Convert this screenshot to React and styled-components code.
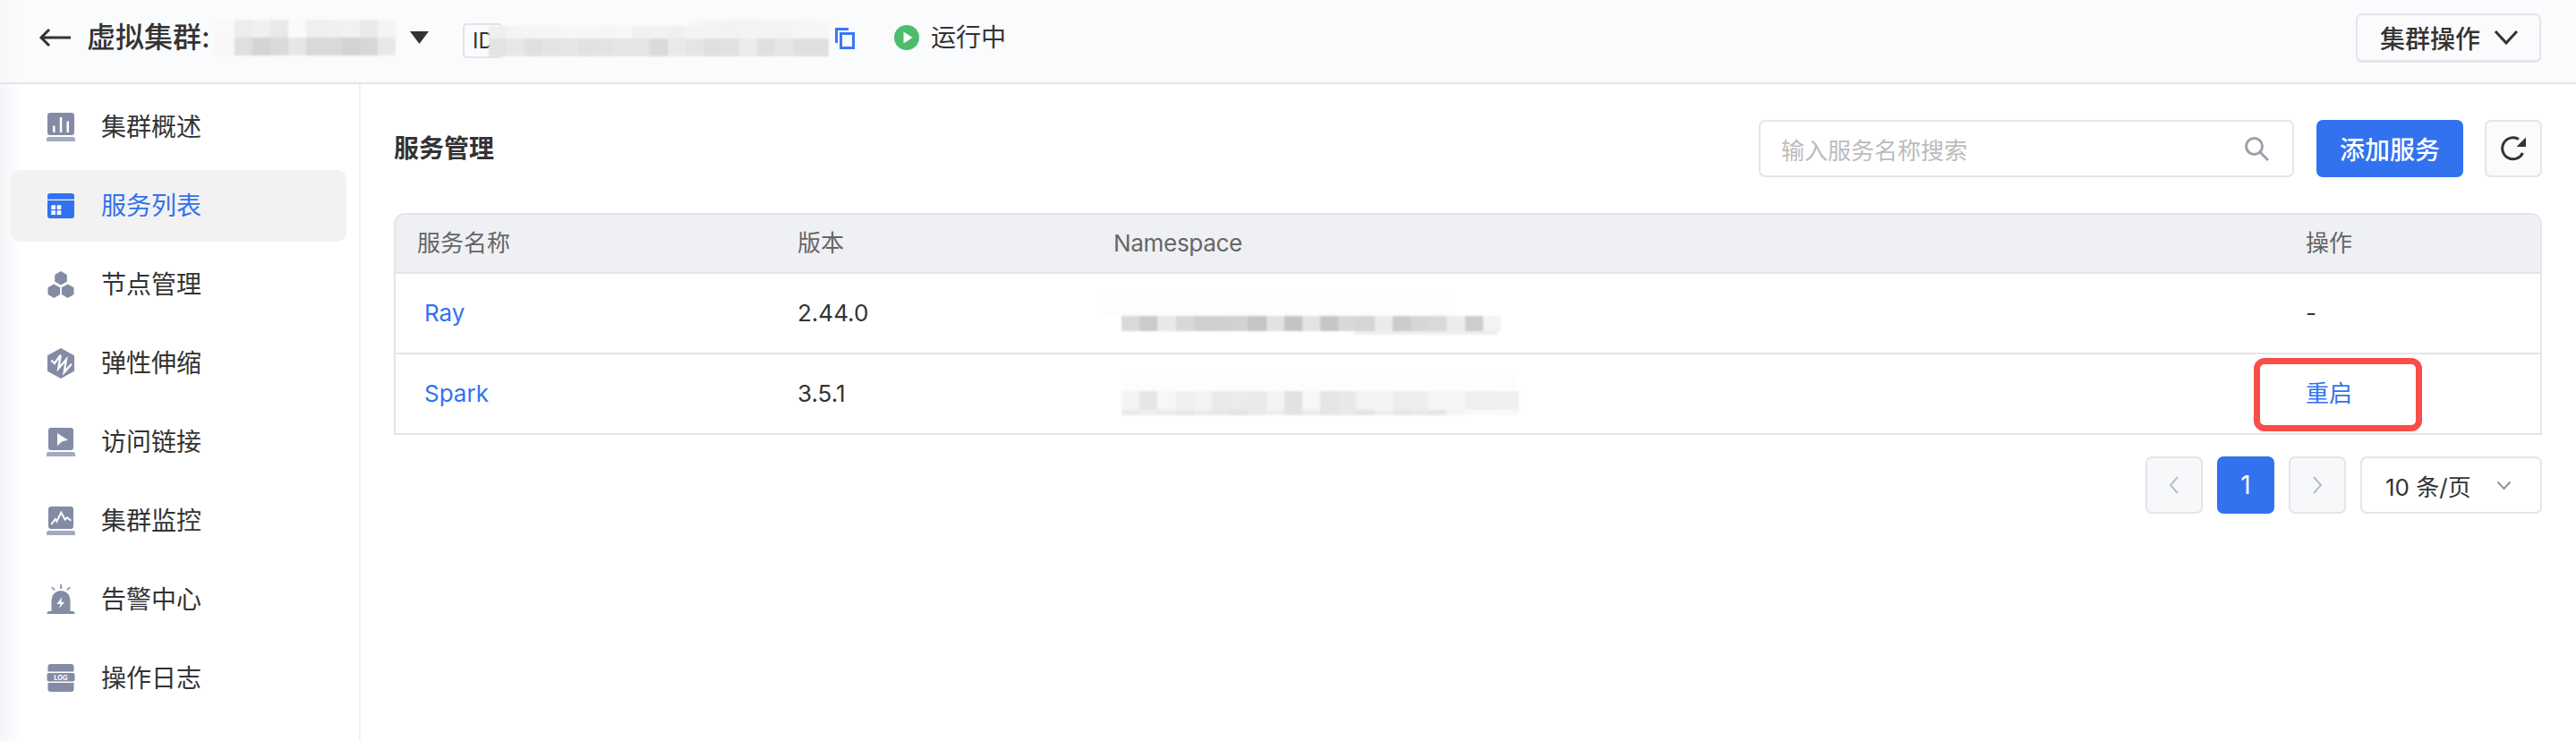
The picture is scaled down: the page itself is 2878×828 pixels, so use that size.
import React from 'react';
import styled, { createGlobalStyle } from 'styled-components';

const GlobalStyle = createGlobalStyle`
  html, body {
    margin: 0;
    height: 100%;
    overflow: hidden;
    background: #fff;
  }
  #root {
    height: 100%;
  }
  * {
    box-sizing: border-box;
  }
`;

const FONT = 'Inter, "Noto Sans CJK SC", sans-serif';
const BLUE = '#3272ef';
const LINE = '#e4e5ea';
const ICON = '#848ba5';

const Page = styled.div`
  display: flex;
  flex-direction: column;
  height: 100%;
  font-family: ${FONT};
  color: #333;
`;

const Header = styled.header`
  flex: none;
  display: flex;
  align-items: center;
  height: 94px;
  padding: 0 39px 8px 43px;
  background: linear-gradient(to right, #f6f7f9 0, #fafbfd 25px);
  border-bottom: 2px solid ${LINE};
`;

const BackIcon = styled.svg`
  flex: none;
  width: 36px;
  height: 24px;
`;

const ClusterTitle = styled.div`
  flex: none;
  width: 143px;
  margin-left: 18px;
  font-size: 32px;
  line-height: 40px;
  font-weight: 500;
  white-space: nowrap;
`;

const Caret = styled.svg`
  flex: none;
  width: 21px;
  height: 14px;
  margin-left: 16px;
`;

const IdTag = styled.span`
  flex: none;
  display: flex;
  align-items: center;
  width: 45px;
  height: 39px;
  margin-left: 38px;
  margin-top: 6px;
  padding-left: 9px;
  border: 2px solid #e2e3e7;
  border-radius: 5px;
  font-size: 24px;
  background: #fafbfc;
`;

const CopyIcon = styled.svg`
  flex: none;
  width: 22px;
  height: 24px;
  margin-left: 3px;
  margin-top: 2px;
`;

const PlayIcon = styled.svg`
  flex: none;
  width: 28px;
  height: 28px;
  margin-left: 44px;
`;

const StatusText = styled.span`
  margin-left: 13px;
  font-size: 28px;
  line-height: 40px;
`;

const ActionButton = styled.button`
  display: flex;
  align-items: center;
  gap: 15px;
  width: 207px;
  height: 55px;
  margin-left: auto;
  padding: 0 0 0 25px;
  border: 2px solid #e4e5e9;
  border-bottom-width: 3px;
  border-radius: 7px;
  background: #fbfbfd;
  font-family: ${FONT};
  font-size: 28px;
  font-weight: 500;
  color: #333;
`;

const Body = styled.div`
  flex: 1;
  display: flex;
  min-height: 0;
`;

const Sidebar = styled.nav`
  flex: none;
  display: flex;
  flex-direction: column;
  gap: 8px;
  width: 403px;
  padding: 8px 14px 0 12px;
  border-right: 2px solid #f0f1f3;
  background: linear-gradient(to right, #f4f5f8 0, #fff 25px);
`;

const NavItem = styled.div`
  display: flex;
  align-items: center;
  gap: 29px;
  height: 80px;
  padding-left: 40px;
  border-radius: 10px;
  background: ${({ $active }) => ($active ? '#f2f2f3' : 'transparent')};
  color: ${({ $active }) => ($active ? BLUE : '#333')};
  font-size: 28px;
  line-height: 40px;
`;

const NavIcon = styled.svg`
  flex: none;
  width: 32px;
  height: 32px;
  overflow: visible;
`;

const Main = styled.main`
  flex: 1;
  min-width: 0;
  padding: 40px 38px 0 37px;
`;

const Toolbar = styled.div`
  display: flex;
  align-items: center;
  height: 64px;
`;

const PageTitle = styled.h2`
  margin: 0;
  font-size: 28px;
  line-height: 40px;
  font-weight: 600;
`;

const SearchBox = styled.div`
  display: flex;
  align-items: center;
  justify-content: space-between;
  width: 598px;
  height: 64px;
  margin-left: auto;
  padding: 0 26px 0 23px;
  border: 2px solid #e4e5e9;
  border-radius: 7px;
  font-size: 26px;
  color: #bcbcbc;
`;

const SearchIcon = styled.svg`
  width: 28px;
  height: 28px;
`;

const AddButton = styled.button`
  width: 164px;
  height: 64px;
  margin-left: 25px;
  border: 0;
  border-radius: 7px;
  background: ${BLUE};
  color: #fff;
  font-family: ${FONT};
  font-size: 28px;
  font-weight: 500;
`;

const RefreshButton = styled.button`
  display: flex;
  align-items: center;
  justify-content: center;
  width: 64px;
  height: 64px;
  margin-left: 24px;
  padding: 0;
  border: 2px solid #e4e5e9;
  border-radius: 7px;
  background: #fafbfc;
`;

const Table = styled.div`
  margin-top: 40px;
  border: 2px solid ${LINE};
  border-top-left-radius: 12px;
  border-top-right-radius: 12px;
`;

const Row = styled.div`
  display: grid;
  grid-template-columns: 425px 353px 1332px 1fr;
  height: ${({ $head, $last }) => ($head ? '66px' : $last ? '88px' : '90px')};
  border-bottom: ${({ $last }) => ($last ? '0' : `2px solid ${LINE}`)};
  background: ${({ $head }) => ($head ? '#eff0f4' : '#fff')};
  color: ${({ $head }) => ($head ? '#666' : '#333')};
  border-top-left-radius: ${({ $head }) => ($head ? '10px' : '0')};
  border-top-right-radius: ${({ $head }) => ($head ? '10px' : '0')};
`;

const Cell = styled.div`
  position: relative;
  display: flex;
  align-items: center;
  padding-left: 24px;
  font-size: 26px;
  line-height: 36px;
`;

const NamespaceLabel = styled.span`
  letter-spacing: -0.3px;
`;

const ServiceLink = styled.a`
  margin-left: ${({ $indent }) => ($indent ? '8px' : '0')};
  color: ${BLUE};
`;

const Highlight = styled.div`
  position: absolute;
  top: 4px;
  left: -34px;
  width: 188px;
  height: 82px;
  border: 7px solid #f94d49;
  border-radius: 12px;
  pointer-events: none;
`;

const Pagination = styled.div`
  display: flex;
  justify-content: flex-end;
  gap: 16px;
  margin-top: 24px;
`;

const PageButton = styled.div`
  display: flex;
  align-items: center;
  justify-content: center;
  width: 64px;
  height: 64px;
  border: ${({ $active }) => ($active ? '0' : `2px solid ${LINE}`)};
  border-radius: 7px;
  background: ${({ $active }) => ($active ? BLUE : '#f7f8fa')};
  color: #fff;
  font-size: 28px;
`;

const PageSize = styled.div`
  display: flex;
  align-items: center;
  justify-content: space-between;
  width: 203px;
  height: 64px;
  padding: 0 32px 0 26px;
  border: 2px solid ${LINE};
  border-radius: 7px;
  font-size: 26px;
  color: #333;
`;

// stands in for the pixelated (redacted) text of the screenshot
const Mosaic = styled.div`
  flex: none;
  display: flex;
  flex-direction: column;
  margin-left: ${({ $left }) => $left || 0}px;
  margin-top: ${({ $top }) => $top || 0}px;
  filter: blur(0.8px);
  position: relative;
`;

const MosaicRow = styled.div`
  display: flex;
  height: ${({ $h }) => $h}px;
  margin-left: ${({ $indent }) => $indent || 0}px;
`;

const MosaicCell = styled.div`
  flex: none;
  width: ${({ $w }) => $w || 20}px;
  background: ${({ $c }) => $c};
`;

const Redacted = ({ rows, left, top }) => (
  <Mosaic $left={left} $top={top}>
    {rows.map((row, i) => (
      <MosaicRow key={i} $h={row.h} $indent={row.indent}>
        {row.cells.map((c, j) => (
          <MosaicCell key={j} $c={c} $w={row.w && j === 0 ? row.w : row.cw} />
        ))}
      </MosaicRow>
    ))}
  </Mosaic>
);

const hex = (s) => s.split(' ').map((c) => '#' + c);

const TITLE_ROWS = [
  { h: 20, w: 22, cells: hex('f9f9fa ededee f0f0f1 e8e9ea fafafb eeeff0 eff0f0 f1f1f2 e9eaeb f4f4f5') },
  { h: 20, w: 22, cells: hex('f7f7f8 dedfe0 d4d4d5 d9dadb e6e6e7 d8d9da d8d9da d2d3d3 d6d7d8 e8e8e9') },
];

const ID_ROWS = [
  { h: 7, indent: 224, cells: hex('f7f7f8 f4f4f5 f3f3f4 f3f3f4 f4f4f5 f4f4f5 f6f6f7 f8f8f9') },
  { h: 14, cells: hex('efeff0 f4f4f5 f4f5f6 f5f5f6 f6f6f7 f7f7f8 f5f5f6 f7f7f8 f1f1f2 f2f2f3 f0f0f1 f4f4f5 f3f3f4 f2f2f3 f4f4f5 f3f3f4 f3f3f4 f6f6f7 f6f6f7') },
  { h: 20, cells: hex('e2e3e4 e8e8e9 dfe0e1 e3e4e5 e6e6e7 e1e2e3 e2e3e4 e6e6e7 e4e5e6 d9dbd8 e9e9ea e5e5e6 dfe0e1 e1e2e3 ebebe9 dfe0e1 e6e6e7 dfe0e1 e0e0e1') },
];

const NS_RAY_ROWS = [
  { h: 22, indent: -27, w: 400, cells: hex('fdfdfd') },
  { h: 17, cw: 20.2, cells: hex('d9d9d9 cbcbcb e8e8e8 d8d8d8 cfcfcf d0d0d0 d2d2d2 c5c5c5 e2e2e2 c4c4c4 e3e3e3 c6c6c6 d8d8d8 d5d5d5 ebebeb cbcbcb d6d6d6 d9d9d9 ececec cdcdcd f3f3f3') },
  { h: 4, indent: 260, w: 160, cells: hex('eeeeee') },
];

const NS_SPARK_ROWS = [
  { h: 17, w: 440, cells: hex('fdfdfd') },
  { h: 21, cw: 20.2, cells: hex('f4f4f4 e6e6e6 f7f7f7 f0f0f0 f3f3f3 e9e9e9 ebebeb e9e9e9 f3f3f3 e2e2e2 f7f7f7 e5e5e5 e8e8e8 f3f3f3 f4f4f4 eeeeee eeeeee f6f6f6 f6f6f6 efefef efefef f0f0f0') },
  { h: 6, cw: 20.2, cells: hex('e9e9e9 efefef ebebeb e6e6e6 ebebeb e8e8e8 e4e4e4 e9e9e9 eeeeee e4e4e4 ebebeb e6e6e6 e9e9e9 e4e4e4 efefef e6e6e6 e9e9e9 e6e6e6 f4f4f4 fafafa fafafa fafafa') },
];

const IconOverview = () => (
  <NavIcon viewBox="0 0 32 32">
    <rect x="1" y="0" width="30" height="25" rx="3" fill={ICON} />
    <path d="M0 32v-2.500A2.500 2.500 0 0 1 2.500 27h27a2.500 2.500 0 0 1 2.500 2.500V32z" fill="#a3a9be" />
    <path d="M7 14.500h2.500V22H7zM14.800 5h2.500v17h-2.500zM22.500 9.500H25V22h-2.500z" fill="#fff" />
  </NavIcon>
);

const IconList = () => (
  <NavIcon viewBox="0 0 32 32">
    <path d="M4 2h24a3 3 0 0 1 3 3v3.700H1V5a3 3 0 0 1 3-3z" fill={BLUE} />
    <path d="M1 10h30v17a3 3 0 0 1-3 3H4a3 3 0 0 1-3-3z" fill={BLUE} />
    <path d="M5.300 15.300H10v4.700H5.300zM11.600 15.300h4.700v4.700h-4.700zM5.300 21.300H10V26H5.300zM11.600 21.300h4.700V26h-4.700z" fill="#fff" />
  </NavIcon>
);

const IconNodes = () => (
  <NavIcon viewBox="0 0 32 32">
    <path d="M16 1l6.800 3.900v7.800L16 16.600l-6.800-3.900V4.900z" fill={ICON} />
    <path d="M8.300 15.400l6.800 3.900v7.800L8.300 31l-6.800-3.900v-7.800z" fill={ICON} />
    <path d="M23.700 15.400l6.800 3.900v7.800L23.700 31l-6.800-3.900v-7.800z" fill={ICON} />
  </NavIcon>
);

const IconScale = () => (
  <NavIcon viewBox="0 0 32 32">
    <path d="M16 -1l15 8.300v17.400L16 33 1 24.700V7.300z" fill={ICON} />
    <path d="M5.300 12.700L9 16l6.700-9.300-2.400 15L22 11.700 19.700 26l8.300-9.300" fill="none" stroke="#fff" strokeWidth="2.300" />
  </NavIcon>
);

const IconLink = () => (
  <NavIcon viewBox="0 0 32 32">
    <rect x="2" y="0" width="28" height="25" rx="3" fill={ICON} />
    <path d="M0 32v-2.500A2.500 2.500 0 0 1 2.500 27h27a2.500 2.500 0 0 1 2.500 2.500V32z" fill="#a3a9be" />
    <path d="M12 6l12 7.700-6.700 1.600-5.300 5z" fill="#fff" />
  </NavIcon>
);

const IconMonitor = () => (
  <NavIcon viewBox="0 0 32 32">
    <rect x="2" y="0" width="28" height="25" rx="3" fill={ICON} />
    <path d="M0 32v-2.500A2.500 2.500 0 0 1 2.500 27h27a2.500 2.500 0 0 1 2.500 2.500V32z" fill="#a3a9be" />
    <path d="M5.300 20l4.400-6 1.600 2.700 5-10 4.400 8 2.300-2.400 4.300 3.400" fill="none" stroke="#fff" strokeWidth="2" />
  </NavIcon>
);

const IconAlarm = () => (
  <NavIcon viewBox="0 0 32 32">
    <path d="M5.500 29V16.500a10.500 10.500 0 0 1 21 0V29z" fill={ICON} />
    <path d="M0.500 32v-.5A2.500 2.500 0 0 1 3 29h26a2.500 2.500 0 0 1 2.500 2.500v.5z" fill={ICON} />
    <path d="M15 -1h2.200v5H15zM5 3l1.400-1.500L10 4.500 8.600 6zM27 3l-1.400-1.500L22 4.500 23.400 6z" fill="#9aa0b6" />
    <path d="M17.300 13.300L11.300 21h4.400l-2 5 6.600-7.300h-4z" fill="#fff" />
  </NavIcon>
);

const IconLog = () => (
  <NavIcon viewBox="0 0 32 32">
    <path d="M4.500 0h23a3 3 0 0 1 3 3v5.500H1.500V3a3 3 0 0 1 3-3z" fill={ICON} />
    <rect x="0.500" y="10" width="31" height="9.500" rx="2" fill={ICON} />
    <path d="M1.500 21h29v7a3 3 0 0 1-3 3h-23a3 3 0 0 1-3-3z" fill={ICON} />
    <text x="16" y="18" textAnchor="middle" fontSize="7.500" fontWeight="700" fontFamily="Inter, sans-serif" fill="#fff">LOG</text>
  </NavIcon>
);

const NAV = [
  { label: '集群概述', icon: IconOverview },
  { label: '服务列表', icon: IconList, active: true },
  { label: '节点管理', icon: IconNodes },
  { label: '弹性伸缩', icon: IconScale },
  { label: '访问链接', icon: IconLink },
  { label: '集群监控', icon: IconMonitor },
  { label: '告警中心', icon: IconAlarm },
  { label: '操作日志', icon: IconLog },
];

const Chevron = ({ d, width, height, color, stroke }) => (
  <svg width={width} height={height} viewBox={`0 0 ${width} ${height}`} fill="none">
    <path d={d} stroke={color} strokeWidth={stroke} />
  </svg>
);

export default function App() {
  return (
    <Page>
      <GlobalStyle />
      <Header>
        <BackIcon viewBox="0 0 36 24" fill="none" stroke="#333" strokeWidth="3">
          <path d="M36 12H3M12 3l-9 9 9 9" />
        </BackIcon>
        <ClusterTitle>虚拟集群:</ClusterTitle>
        <Redacted rows={TITLE_ROWS} />
        <Caret viewBox="0 0 21 14">
          <path d="M0 0h21L10.500 14z" fill="#333" />
        </Caret>
        <IdTag>ID</IdTag>
        <Redacted rows={ID_ROWS} left={-16} />
        <CopyIcon viewBox="0 0 22 24" fill="none" stroke="#3b78f5" strokeWidth="3">
          <path d="M1.500 17V1.500H15" />
          <rect x="6.500" y="6.500" width="14" height="16" />
        </CopyIcon>
        <PlayIcon viewBox="0 0 28 28">
          <circle cx="14" cy="14" r="14" fill="#4bbd6c" />
          <path d="M10.500 7.500L20.500 14l-10 6.500z" fill="#fff" />
        </PlayIcon>
        <StatusText>运行中</StatusText>
        <ActionButton>
          集群操作
          <Chevron d="M2 2l12 13L26 2" width={28} height={17} color="#333" stroke={3} />
        </ActionButton>
      </Header>
      <Body>
        <Sidebar>
          {NAV.map(({ label, icon: Icon, active }) => (
            <NavItem key={label} $active={active}>
              <Icon />
              {label}
            </NavItem>
          ))}
        </Sidebar>
        <Main>
          <Toolbar>
            <PageTitle>服务管理</PageTitle>
            <SearchBox>
              输入服务名称搜索
              <SearchIcon viewBox="0 0 28 28" fill="none" stroke="#9ca1ab" strokeWidth="3">
                <circle cx="11.500" cy="11.500" r="9" />
                <path d="M18 18l9 9" />
              </SearchIcon>
            </SearchBox>
            <AddButton>添加服务</AddButton>
            <RefreshButton>
              <svg width="30" height="30" viewBox="0 0 30 30" fill="none">
                <path d="M25.500 20A12 12 0 1 1 21 4.500" stroke="#333" strokeWidth="3" />
                <path d="M29 2.500V13H18.500z" fill="#333" />
              </svg>
            </RefreshButton>
          </Toolbar>
          <Table>
            <Row $head>
              <Cell>服务名称</Cell>
              <Cell>版本</Cell>
              <Cell><NamespaceLabel>Namespace</NamespaceLabel></Cell>
              <Cell>操作</Cell>
            </Row>
            <Row>
              <Cell><ServiceLink $indent>Ray</ServiceLink></Cell>
              <Cell>2.44.0</Cell>
              <Cell><Redacted rows={NS_RAY_ROWS} left={9} top={5} /></Cell>
              <Cell>-</Cell>
            </Row>
            <Row $last>
              <Cell><ServiceLink $indent>Spark</ServiceLink></Cell>
              <Cell>3.5.1</Cell>
              <Cell><Redacted rows={NS_SPARK_ROWS} left={9} top={3} /></Cell>
              <Cell>
                <ServiceLink>重启</ServiceLink>
                <Highlight />
              </Cell>
            </Row>
          </Table>
          <Pagination>
            <PageButton>
              <Chevron d="M10 2L2 11l8 9" width={12} height={22} color="#b9bcc3" stroke={2} />
            </PageButton>
            <PageButton $active>1</PageButton>
            <PageButton>
              <Chevron d="M2 2l8 9-8 9" width={12} height={22} color="#b9bcc3" stroke={2} />
            </PageButton>
            <PageSize>
              10 条/页
              <Chevron d="M1.500 1.500L8.500 9l7-7.500" width={17} height={11} color="#8f939b" stroke={2} />
            </PageSize>
          </Pagination>
        </Main>
      </Body>
    </Page>
  );
}
